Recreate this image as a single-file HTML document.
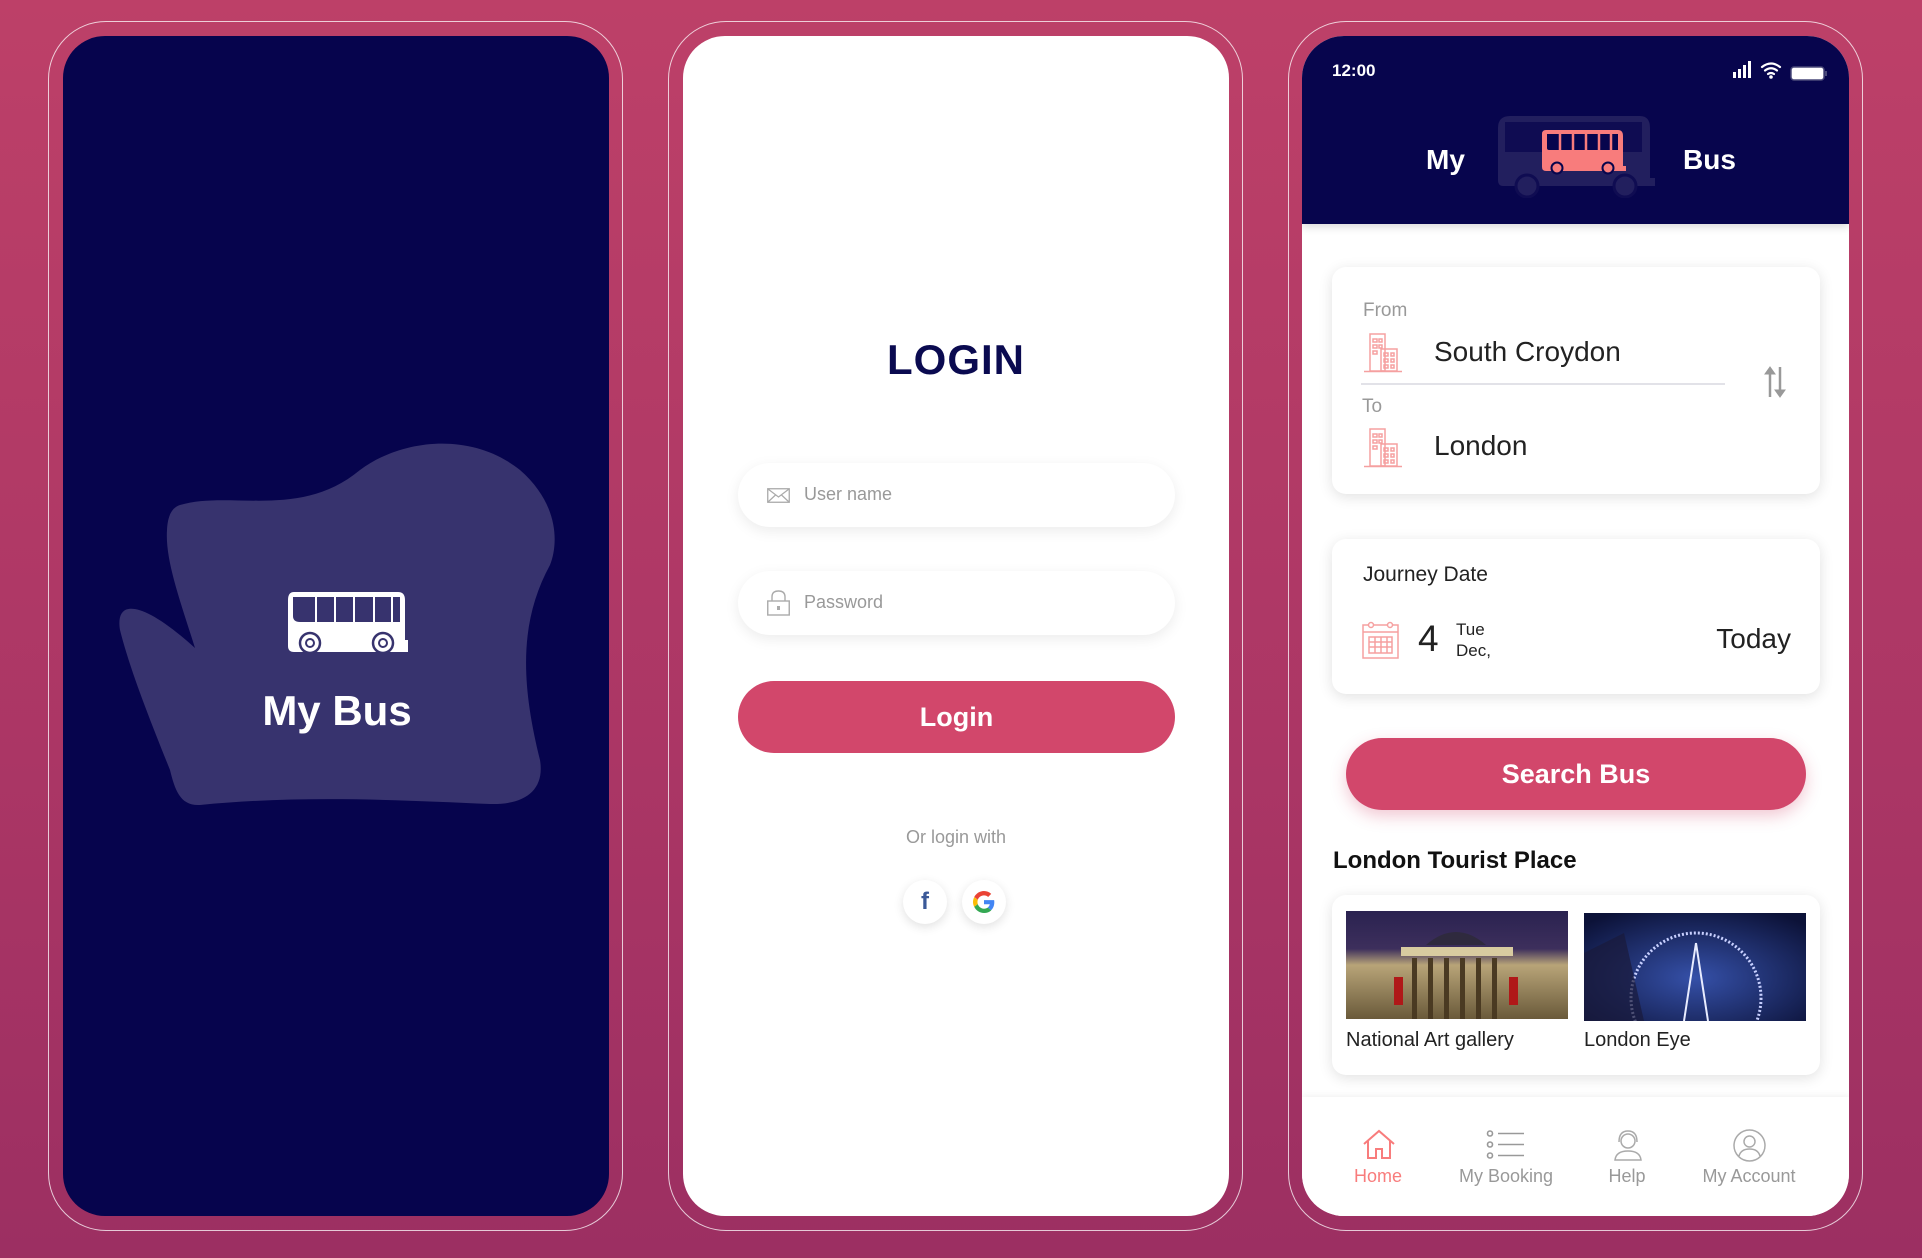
<!DOCTYPE html>
<html><head><meta charset="utf-8"><style>
*{margin:0;padding:0;box-sizing:border-box}
body{width:1922px;height:1258px;overflow:hidden;background:linear-gradient(180deg,#bd4068 0%,#ab3665 60%,#9c2f62 100%);font-family:"Liberation Sans",sans-serif;position:relative}
.outer{position:absolute;top:21px;height:1210px;width:575px;border:1.5px solid rgba(255,255,255,.75);border-radius:58px}
.scr{position:absolute;top:36px;height:1180px;width:546px;border-radius:42px;overflow:hidden}
.abs{position:absolute}
.field{position:absolute;left:55px;width:437px;height:64px;border-radius:32px;background:#fff;box-shadow:0 4px 14px rgba(0,0,0,.08)}
.card{position:absolute;left:30px;width:488px;background:#fff;border-radius:14px;box-shadow:0 3px 14px rgba(0,0,0,.12)}
.lbl{color:#999;font-size:19px}
.nav{position:absolute;top:1130px;text-align:center;font-size:18px;color:#999;transform:translateX(-50%);white-space:nowrap}
</style></head><body>

<!-- Phone 1 -->
<div class="outer" style="left:48px"></div>
<div class="scr" style="left:63px;background:#06044d">
<svg class="abs" style="left:0;top:0" width="546" height="1180" viewBox="63 36 546 1180">
<path d="M180 505 C230 490 300 520 360 470 C400 440 470 430 520 470 C560 505 558 545 550 565 C520 620 520 680 540 760 C545 790 525 805 490 804 C400 800 300 795 200 805 C180 806 175 790 170 770 C150 720 130 670 120 630 C115 600 140 598 195 648 C180 600 165 560 167 530 C168 512 174 507 180 505 Z" fill="#37336e"/>
<path d="M294 592 H398 Q405 592 405 600 V640 H408 V652 H294 Q288 652 288 646 V600 Q288 592 294 592 Z" fill="#fff"/>
<path d="M293 597 H400 V622 H300 Q293 622 293 616 Z" fill="#37336e"/>
<g stroke="#fff" stroke-width="2"><line x1="316" y1="597" x2="316" y2="622"/><line x1="335" y1="597" x2="335" y2="622"/><line x1="354" y1="597" x2="354" y2="622"/><line x1="374" y1="597" x2="374" y2="622"/><line x1="392" y1="597" x2="392" y2="622"/></g>
<circle cx="310" cy="643" r="10" fill="#fff" stroke="#37336e" stroke-width="2.5"/><circle cx="310" cy="643" r="5" fill="#37336e"/><circle cx="310" cy="643" r="3" fill="#fff"/>
<circle cx="383" cy="643" r="10" fill="#fff" stroke="#37336e" stroke-width="2.5"/><circle cx="383" cy="643" r="5" fill="#37336e"/><circle cx="383" cy="643" r="3" fill="#fff"/>
<text x="337" y="725" text-anchor="middle" font-family="Liberation Sans" font-weight="bold" font-size="42" fill="#fff">My Bus</text>
</svg>
</div>

<!-- Phone 2 -->
<div class="outer" style="left:668px"></div>
<div class="scr" style="left:683px;background:#fff">
<div class="abs" style="left:0;width:546px;top:300px;text-align:center;font-size:42px;font-weight:bold;color:#0a0a50;letter-spacing:1px">LOGIN</div>
<div class="field" style="top:427px">
<svg class="abs" style="left:29px;top:25px" width="23" height="15"><rect x=".75" y=".75" width="21.5" height="13.5" fill="none" stroke="#aaa" stroke-width="1.3"/><path d="M1 1 L11.5 9 L22 1 M1 14 L8.5 7 M22 14 L14.5 7" fill="none" stroke="#aaa" stroke-width="1.2"/></svg>
<div class="abs lbl" style="left:66px;top:21px;font-size:18px">User name</div></div>
<div class="field" style="top:535px">
<svg class="abs" style="left:29px;top:19px" width="23" height="26"><path d="M5 11 V7 Q5 1 11.5 1 Q18 1 18 7 V11" fill="none" stroke="#aaa" stroke-width="1.4"/><rect x=".75" y="11" width="21.5" height="14" fill="none" stroke="#aaa" stroke-width="1.4"/><rect x="10" y="16" width="3" height="4" fill="#aaa"/></svg>
<div class="abs lbl" style="left:66px;top:21px;font-size:18px">Password</div></div>
<div class="abs" style="left:55px;top:645px;width:437px;height:72px;border-radius:36px;background:#d2476b;color:#fff;font-weight:bold;font-size:27px;text-align:center;line-height:72px">Login</div>
<div class="abs" style="left:0;width:546px;top:791px;text-align:center;font-size:18px;color:#999">Or login with</div>
<div class="abs" style="left:220px;top:844px;width:44px;height:44px;border-radius:50%;background:#fff;box-shadow:0 3px 10px rgba(0,0,0,.12);text-align:center;line-height:44px;font-weight:bold;font-size:24px;color:#3b5998">f</div>
<div class="abs" style="left:279px;top:844px;width:44px;height:44px;border-radius:50%;background:#fff;box-shadow:0 3px 10px rgba(0,0,0,.12)">
<svg class="abs" style="left:11px;top:11px" width="22" height="22" viewBox="0 0 48 48"><path fill="#EA4335" d="M24 9.5c3.5 0 6.6 1.2 9 3.5l6.7-6.7C35.6 2.4 30.2 0 24 0 14.6 0 6.6 5.4 2.7 13.2l7.8 6C12.4 13.7 17.7 9.5 24 9.5z"/><path fill="#4285F4" d="M46.5 24.5c0-1.6-.1-3.1-.4-4.5H24v9h12.6c-.5 2.9-2.2 5.4-4.7 7.1l7.6 5.9c4.4-4.1 7-10.1 7-17.5z"/><path fill="#FBBC05" d="M10.5 28.7c-.5-1.4-.8-3-.8-4.7s.3-3.2.8-4.7l-7.8-6C1 16.6 0 20.2 0 24s1 7.4 2.7 10.7l7.8-6z"/><path fill="#34A853" d="M24 48c6.5 0 11.9-2.1 15.9-5.8l-7.6-5.9c-2.1 1.4-4.9 2.3-8.3 2.3-6.3 0-11.6-4.2-13.5-9.9l-7.8 6C6.6 42.6 14.6 48 24 48z"/></svg></div>
</div>

<!-- Phone 3 -->
<div class="outer" style="left:1288px"></div>
<div class="scr" style="left:1302px;width:547px;background:#fff">
<div class="abs" style="left:0;top:0;width:547px;height:188px;background:#07054d;box-shadow:0 3px 8px rgba(0,0,0,.15)">
<div class="abs" style="left:30px;top:25px;color:#fff;font-weight:bold;font-size:17px">12:00</div>
<svg class="abs" style="left:431px;top:25px" width="95" height="20">
<g fill="#fff"><rect x="0" y="11" width="3" height="6"/><rect x="5" y="8" width="3" height="9"/><rect x="10" y="4" width="3" height="13"/><rect x="15" y="0" width="3" height="17"/></g>
<g fill="none" stroke="#fff" stroke-width="2.2" stroke-linecap="round"><path d="M29 6 Q38 -1 47 6"/><path d="M32 9.5 Q38 5 44 9.5"/><path d="M35 13 Q38 11 41 13"/></g><circle cx="38" cy="16" r="1.8" fill="#fff"/>
<rect x="58" y="6" width="33" height="13" rx="3" fill="#fff" stroke="#4a4a7a" stroke-width="1.5"/><rect x="92" y="10" width="2" height="5" fill="#4a4a7a"/>
</svg>
<div class="abs" style="left:124px;top:108px;color:#fff;font-weight:bold;font-size:28px">My</div>
<div class="abs" style="left:381px;top:108px;color:#fff;font-weight:bold;font-size:28px">Bus</div>
<svg class="abs" style="left:196px;top:80px" width="158" height="82" viewBox="1498 116 158 82">
<path d="M1510 116 H1640 Q1650 116 1650 128 V178 H1655 V186 H1503 Q1498 186 1498 180 V128 Q1498 116 1510 116 Z" fill="#221f5e"/>
<path d="M1505 122 H1642 V152 H1505 Z" fill="#0f0c52"/>
<circle cx="1527" cy="186" r="11" fill="#221f5e" stroke="#0f0c52" stroke-width="3"/><circle cx="1625" cy="186" r="11" fill="#221f5e" stroke="#0f0c52" stroke-width="3"/>
<path d="M1546 130 H1618 Q1623 130 1623 136 V166 H1626 V171 H1546 Q1542 171 1542 167 V134 Q1542 130 1546 130 Z" fill="#f87c7c"/>
<path d="M1547 134 H1618 V150 H1549 Q1547 150 1547 148 Z" fill="#07054d"/>
<g stroke="#f87c7c" stroke-width="2.5"><line x1="1560" y1="134" x2="1560" y2="150"/><line x1="1573" y1="134" x2="1573" y2="150"/><line x1="1586" y1="134" x2="1586" y2="150"/><line x1="1599" y1="134" x2="1599" y2="150"/><line x1="1611" y1="134" x2="1611" y2="150"/></g>
<circle cx="1557" cy="168" r="5.5" fill="#f87c7c" stroke="#07054d" stroke-width="2"/><circle cx="1608" cy="168" r="5.5" fill="#f87c7c" stroke="#07054d" stroke-width="2"/>
</svg>
</div>

<div class="card" style="top:231px;height:227px">
<div class="abs lbl" style="left:31px;top:33px">From</div>
<svg class="abs" style="left:32px;top:66px" width="38" height="40"><g fill="none" stroke="#f5a0a0" stroke-width="1.5"><rect x="6" y="1" width="15" height="37"/><rect x="17" y="16" width="16" height="22"/><line x1="0" y1="38.5" x2="38" y2="38.5"/><path d="M9 6h4v3h-4zM15 6h3v3h-3zM9 12h4v3h-4zM15 12h3v3h-3zM9 18h4v3h-4zM20 20h4v3h-4zM27 20h3v3h-3zM20 26h4v3h-4zM27 26h3v3h-3zM20 32h4v3h-4zM27 32h3v3h-3z"/></g></svg>
<div class="abs" style="left:102px;top:69px;font-size:28px;color:#222">South Croydon</div>
<div class="abs" style="left:29px;top:116px;width:364px;height:1.5px;background:#e2e2e8"></div>
<div class="abs lbl" style="left:30px;top:129px">To</div>
<svg class="abs" style="left:32px;top:161px" width="38" height="40"><g fill="none" stroke="#f5a0a0" stroke-width="1.5"><rect x="6" y="1" width="15" height="37"/><rect x="17" y="16" width="16" height="22"/><line x1="0" y1="38.5" x2="38" y2="38.5"/><path d="M9 6h4v3h-4zM15 6h3v3h-3zM9 12h4v3h-4zM15 12h3v3h-3zM9 18h4v3h-4zM20 20h4v3h-4zM27 20h3v3h-3zM20 26h4v3h-4zM27 26h3v3h-3zM20 32h4v3h-4zM27 32h3v3h-3z"/></g></svg>
<div class="abs" style="left:102px;top:163px;font-size:28px;color:#222">London</div>
<svg class="abs" style="left:431px;top:98px" width="24" height="34"><g stroke="#999" stroke-width="2.5" fill="#999"><line x1="7" y1="6" x2="7" y2="32"/><path d="M2 9 L7 2 L12 9 Z" stroke-width="1"/><line x1="17" y1="2" x2="17" y2="28"/><path d="M12 25 L17 32 L22 25 Z" stroke-width="1"/></g></svg>
</div>

<div class="card" style="top:503px;height:155px">
<div class="abs" style="left:31px;top:24px;font-size:21px;color:#222">Journey Date</div>
<svg class="abs" style="left:30px;top:81px" width="37" height="39"><g fill="none" stroke="#f5a0a0" stroke-width="1.5"><rect x="1" y="5" width="35" height="33"/><line x1="1" y1="12" x2="36" y2="12"/><circle cx="9" cy="5" r="2.5" fill="#fff"/><circle cx="28" cy="5" r="2.5" fill="#fff"/><rect x="7" y="17" width="23" height="16"/><path d="M7 22h23M7 27h23M13 17v16M19 17v16M25 17v16"/></g></svg>
<div class="abs" style="left:86px;top:79px;font-size:37px;color:#222">4</div>
<div class="abs" style="left:124px;top:80px;font-size:17px;color:#222;line-height:21px">Tue<br>Dec,</div>
<div class="abs" style="right:29px;top:84px;font-size:28px;color:#222">Today</div>
</div>

<div class="abs" style="left:44px;top:702px;width:460px;height:72px;border-radius:36px;background:#d2476b;color:#fff;font-weight:bold;font-size:27px;text-align:center;line-height:72px;box-shadow:0 6px 16px rgba(210,71,107,.3)">Search Bus</div>
<div class="abs" style="left:31px;top:811px;font-size:24px;font-weight:bold;color:#111">London Tourist Place</div>

<div class="card" style="top:859px;height:180px">
<svg class="abs" style="left:14px;top:16px" width="222" height="108"><defs><linearGradient id="sk" x1="0" y1="0" x2="0" y2="1"><stop offset="0" stop-color="#2a2250"/><stop offset=".35" stop-color="#3d2f5c"/><stop offset=".5" stop-color="#b8a478"/><stop offset="1" stop-color="#6a5a3a"/></linearGradient></defs><rect width="222" height="108" fill="url(#sk)"/><path d="M80 34 Q110 8 140 34Z" fill="#2f2a3e"/><rect x="55" y="36" width="112" height="9" fill="#d8cba0"/><g fill="#4a3a22"><rect x="66" y="47" width="5" height="61"/><rect x="82" y="47" width="5" height="61"/><rect x="98" y="47" width="5" height="61"/><rect x="114" y="47" width="5" height="61"/><rect x="130" y="47" width="5" height="61"/><rect x="146" y="47" width="5" height="61"/></g><rect x="48" y="66" width="9" height="28" fill="#b01818"/><rect x="163" y="66" width="9" height="28" fill="#b01818"/></svg>
<svg class="abs" style="left:252px;top:18px" width="222" height="108"><defs><radialGradient id="ey" cx=".5" cy=".6" r=".7"><stop offset="0" stop-color="#3550a8"/><stop offset="1" stop-color="#0c1238"/></radialGradient></defs><rect width="222" height="108" fill="url(#ey)"/><circle cx="112" cy="85" r="65" fill="none" stroke="#c8d0ff" stroke-width="3" stroke-dasharray="2 2"/><path d="M112 30 L100 108 M112 30 L124 108" stroke="#e8ecff" stroke-width="2"/><path d="M0 40 L40 20 L60 108 H0Z" fill="#1a1a3a" opacity=".7"/></svg>
<div class="abs" style="left:14px;top:134px;font-size:20px;color:#222">National Art gallery</div>
<div class="abs" style="left:252px;top:134px;font-size:20px;color:#222">London Eye</div>
</div>

<div class="abs" style="left:0;top:1061px;width:547px;height:119px;background:#fff;box-shadow:0 -2px 6px rgba(0,0,0,.05)"></div>
<svg class="abs" style="left:60px;top:1093px" width="34" height="30"><path d="M2 15 L17 2 L32 15 M6 12 V29 H14 V20 H20 V29 H28 V12" fill="none" stroke="#f87c7c" stroke-width="2"/></svg>
<svg class="abs" style="left:184px;top:1094px" width="40" height="30"><g fill="none" stroke="#999" stroke-width="1.6"><circle cx="4" cy="3.5" r="2.5"/><circle cx="4" cy="14.5" r="2.5"/><circle cx="4" cy="25.5" r="2.5"/><path d="M12 3.5H38M12 14.5H38M12 25.5H38"/></g></svg>
<svg class="abs" style="left:311px;top:1093px" width="30" height="32"><g fill="none" stroke="#aaa" stroke-width="1.5"><circle cx="15" cy="12" r="7"/><path d="M6 13 Q6 2 15 2 Q24 2 24 13 M2 31 Q3 22 15 22 Q27 22 28 31 Z"/></g></svg>
<svg class="abs" style="left:431px;top:1093px" width="33" height="33"><g fill="none" stroke="#aaa" stroke-width="1.5"><circle cx="16.5" cy="16.5" r="15.5"/><circle cx="16.5" cy="12.5" r="5.5"/><path d="M6 27 Q8 20 16.5 20 Q25 20 27 27"/></g></svg>
<div class="nav" style="left:76px;color:#f87c7c">Home</div>
<div class="nav" style="left:204px">My Booking</div>
<div class="nav" style="left:325px">Help</div>
<div class="nav" style="left:447px">My Account</div>
</div>
</body></html>
